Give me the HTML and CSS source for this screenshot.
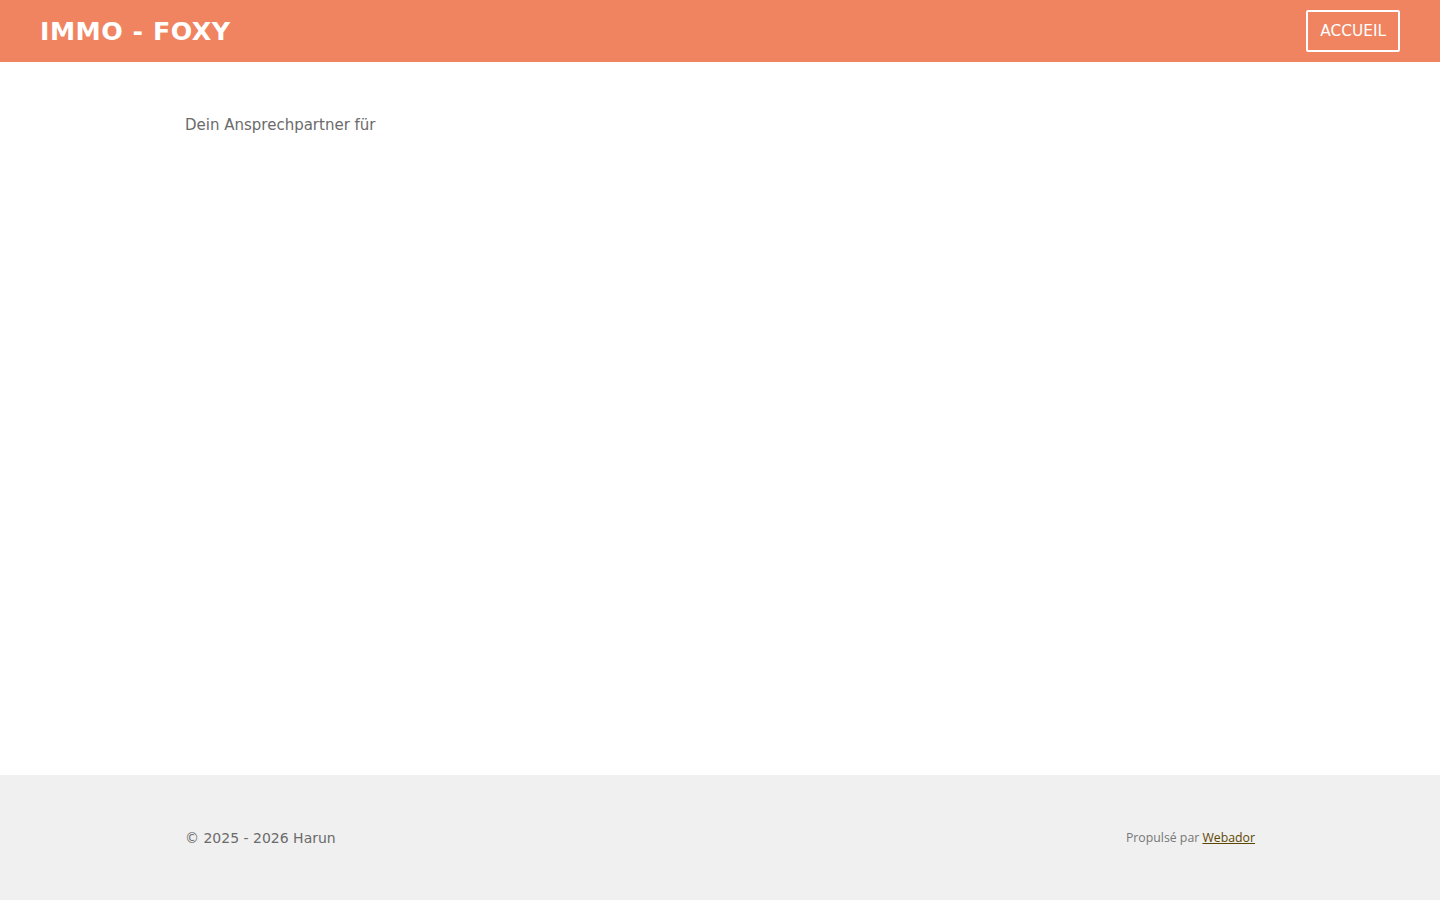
FILE: index.html
```html
<!DOCTYPE html>
<html lang="de">
<head>
<meta charset="utf-8">
<title>IMMO - FOXY</title>
<link rel="stylesheet" href="styles.css">
</head>
<body>
<header class="topbar">
  <div class="brand">IMMO - FOXY</div>
  <nav class="nav"><a class="nav-btn" href="#">ACCUEIL</a></nav>
</header>
<main class="main">
  <div class="container">
    <p class="lead">Dein Ansprechpartner für</p>
  </div>
</main>
<footer class="footer">
  <div class="container footer-row">
    <div class="copy">© 2025 - 2026 Harun</div>
    <div class="powered">Propulsé par <a href="#">Webador</a></div>
  </div>
</footer>
</body>
</html>
```
FILE: styles.css
```css
* { box-sizing: border-box; }
html, body { margin: 0; padding: 0; }
body {
  font-family: "DejaVu Sans", sans-serif;
  color: #6b6b6b;
  background: #fff;
}
.topbar {
  height: 62px;
  background: #f08461;
  display: flex;
  align-items: center;
  justify-content: space-between;
  padding: 0 40px;
}
.brand {
  color: #fff;
  font-weight: bold;
  font-size: 25.3px;
  letter-spacing: 0.5px;
}
.nav-btn {
  display: block;
  color: #fff;
  text-decoration: none;
  border: 2px solid #fff;
  border-radius: 2px;
  height: 42px;
  padding: 0 12px 0 12px;
  line-height: 38px;
  font-size: 15.4px;
}
.container {
  width: 1070px;
  margin: 0 auto;
}
.main {
  min-height: 713px;
  padding-top: 52px;
}
.lead {
  margin: 0;
  font-size: 15px;
  line-height: 22px;
}
.footer {
  background: #f0f0f0;
  height: 125px;
}
.footer-row {
  display: flex;
  justify-content: space-between;
  align-items: center;
  height: 125px;
}
.copy { font-size: 14px; }
.powered {
  font-family: "Open Sans", sans-serif;
  font-size: 12.3px;
  color: #777;
}
.powered a { color: #5c4700; }
```
